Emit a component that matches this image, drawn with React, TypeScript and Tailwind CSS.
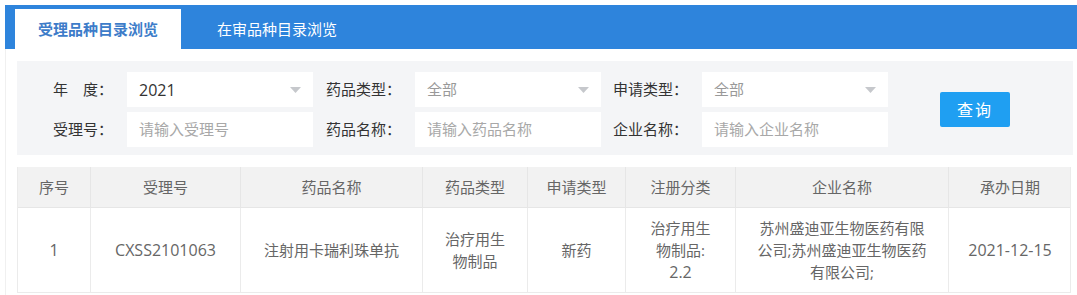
import React from "react";

const font = { fontFamily: '"Open Sans", "Noto Sans CJK SC", sans-serif' };

function Caret() {
    return (
        <svg width="11" height="6" viewBox="0 0 11 6" className="shrink-0">
            <path d="M0 0 L11 0 L5.5 6 Z" fill="#c6c8cc" />
        </svg>
    );
}

function Label({ text, w }: { text: string, w: string }) {
    return (
        <div className={`${w} shrink-0 pr-[14px] text-right text-[15px] text-[#333]`}>{text}</div>
    );
}

function SelectBox({ value, dim }: { value: string, dim?: boolean }) {
    return (
        <div className="w-[186px] h-[35px] bg-white flex items-center justify-between pl-3 pr-[12px]">
            <span className={dim ? "text-[15px] text-[#999]" : "text-[16px] text-[#333]"}>{value}</span>
            <Caret />
        </div>
    );
}

function InputBox({ placeholder }: { placeholder: string }) {
    return (
        <div className="w-[186px] h-[35px] bg-white flex items-center pl-3">
            <span className="text-[15px] text-[#a8a8a8]">{placeholder}</span>
        </div>
    );
}

const cols = [
    { title: "序号", w: "w-[73px]" },
    { title: "受理号", w: "w-[150px]" },
    { title: "药品名称", w: "w-[182px]" },
    { title: "药品类型", w: "w-[105px]" },
    { title: "申请类型", w: "w-[98px]" },
    { title: "注册分类", w: "w-[110px]" },
    { title: "企业名称", w: "w-[213px]" },
    { title: "承办日期", w: "w-[122px]" },
];

const row: React.ReactNode[] = [
    <span className="text-[16px]">1</span>,
    <span className="text-[16px]">CXSS2101063</span>,
    "注射用卡瑞利珠单抗",
    <>治疗用生<br />物制品</>,
    "新药",
    <>治疗用生<br />物制品:<br /><span className="text-[16px]">2.2</span></>,
    <>苏州盛迪亚生物医药有限<br />公司;苏州盛迪亚生物医药<br />有限公司;</>,
    <span className="text-[16px]">2021-12-15</span>,
];

export default function App() {
    return (
        <div className="w-[1077px] h-[295px] bg-white overflow-hidden pl-[5px] pt-[5px]" style={font}>
            {/* tabs */}
            <div className="h-[44px] bg-[#2e84dc] flex items-end pl-[10px]">
                <div className="w-[166px] h-[40px] bg-white flex items-center justify-center text-[15px] font-bold text-[#3d7cc9]">
                    受理品种目录浏览
                </div>
                <div className="w-[192px] h-[40px] flex items-center justify-center text-[15px] text-white">
                    在审品种目录浏览
                </div>
            </div>

            <div className="border-l border-[#f0f0f0] pl-[11px] pr-[5px] pt-[12px] h-[246px]">
                {/* filters */}
                <div className="w-[1056px] h-[94px] bg-[#f4f5f7] flex items-center pt-[3px]">
                    <div className="flex flex-col gap-[5px]">
                        <div className="flex items-center">
                            <Label text="年　度：" w="w-[110px]" />
                            <SelectBox value="2021" />
                            <Label text="药品类型：" w="w-[102px]" />
                            <SelectBox value="全部" dim />
                            <Label text="申请类型：" w="w-[101px]" />
                            <SelectBox value="全部" dim />
                        </div>
                        <div className="flex items-center">
                            <Label text="受理号：" w="w-[110px]" />
                            <InputBox placeholder="请输入受理号" />
                            <Label text="药品名称：" w="w-[102px]" />
                            <InputBox placeholder="请输入药品名称" />
                            <Label text="企业名称：" w="w-[101px]" />
                            <InputBox placeholder="请输入企业名称" />
                        </div>
                    </div>
                    <button className="ml-[52px] w-[70px] h-[35px] bg-[#1f9ff2] text-white text-[16px] rounded-[2px] tracking-[2px]">
                        查询
                    </button>
                </div>

                {/* table */}
                <div className="mt-[12px] w-[1054px] border-l border-r border-[#ebebeb]">
                    <div className="flex h-[41px] bg-[#f2f2f2] border-b border-[#e6e6e6]">
                        {cols.map((c, i) => (
                            <div key={c.title} className={`${c.w} shrink-0 flex items-center justify-center text-[15px] text-[#666] ${i < cols.length - 1 ? "border-r border-[#e6e6e6]" : ""}`}>
                                {c.title}
                            </div>
                        ))}
                    </div>
                    <div className="flex h-[85px] border-b border-[#ebebeb]">
                        {cols.map((c, i) => (
                            <div key={c.title} className={`${c.w} shrink-0 flex items-center justify-center text-center text-[15px] leading-[22px] text-[#666] ${i < cols.length - 1 ? "border-r border-[#ebebeb]" : ""}`}>
                                <span>{row[i]}</span>
                            </div>
                        ))}
                    </div>
                </div>
            </div>
        </div>
    );
}
